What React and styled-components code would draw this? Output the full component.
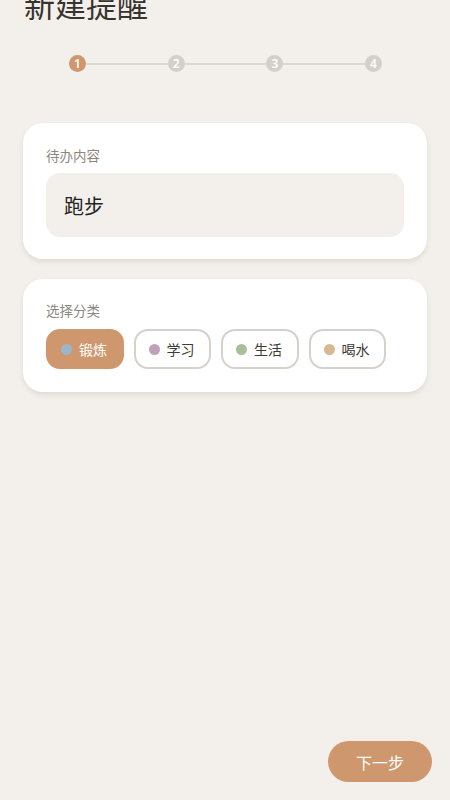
import React, { useState } from "react";
import styled, { createGlobalStyle } from "styled-components";

const GlobalStyle = createGlobalStyle`
  html, body {
    margin: 0;
    padding: 0;
    background: #f3f0eb;
  }
  body {
    font-family: "Noto Sans CJK SC", "Noto Sans", sans-serif;
    overflow: hidden;
  }
`;

const Page = styled.div`
  width: 450px;
  height: 800px;
  display: flex;
  flex-direction: column;
  background: #f3f0eb;
  overflow: hidden;
`;

const Content = styled.div`
  padding: 0 23px;
  display: flex;
  flex-direction: column;
`;

const Title = styled.h1`
  margin: -15px 0 0 1px;
  font-size: 31px;
  line-height: 38px;
  font-weight: 400;
  color: #38332f;
`;

const Stepper = styled.div`
  display: flex;
  align-items: center;
  margin: 32px 45px 0 46px;
`;

const StepDot = styled.div`
  width: 17px;
  height: 17px;
  border-radius: 50%;
  flex-shrink: 0;
  display: flex;
  align-items: center;
  justify-content: center;
  background: ${(p) => (p.active ? "#cf976d" : "#d3cfca")};
  color: #fff;
  font-family: "Noto Sans", sans-serif;
  font-size: 12px;
  font-weight: 600;
  line-height: 1;
`;

const StepLine = styled.div`
  flex: 1;
  height: 2px;
  background: #dcd8d3;
`;

const Card = styled.div`
  background: #fff;
  border-radius: 20px;
  padding: ${(p) => p.pad || "23px 23px 22px"};
  margin-top: ${(p) => p.top || "20px"};
  box-shadow: 0 3px 5px rgba(90, 75, 60, 0.12);
`;

const Label = styled.div`
  font-size: 13.5px;
  line-height: 18px;
  color: #8b8681;
  margin-bottom: ${(p) => p.gap || "9px"};
`;

const InputBox = styled.div`
  height: 64px;
  border-radius: 14px;
  background: #f3f0eb;
  display: flex;
  align-items: center;
  padding: 0 18px;
  font-size: 20px;
  color: #222;
`;

const Chips = styled.div`
  display: flex;
  gap: 10px;
`;

const Chip = styled.button`
  width: 77.5px;
  height: 40px;
  box-sizing: border-box;
  display: flex;
  align-items: center;
  gap: 7px;
  padding: 0 0 0 13px;
  border-radius: 14px;
  border: 2px solid ${(p) => (p.selected ? "#cf976d" : "#d5d1cc")};
  background: ${(p) => (p.selected ? "#cf976d" : "#fff")};
  color: ${(p) => (p.selected ? "#fff" : "#3f3a36")};
  font-family: inherit;
  font-size: 14px;
  cursor: pointer;
`;

const Dot = styled.span`
  width: 11px;
  height: 11px;
  flex-shrink: 0;
  border-radius: 50%;
  background: ${(p) => p.color};
`;

const Footer = styled.div`
  margin-top: auto;
  display: flex;
  justify-content: flex-end;
  padding: 0 18px 18px;
`;

const NextButton = styled.button`
  width: 104px;
  height: 41px;
  border: none;
  border-radius: 21px;
  background: #cf976d;
  color: #fff;
  font-family: inherit;
  font-size: 16px;
  cursor: pointer;
`;

const categories = [
  { name: "锻炼", color: "#9db5cb" },
  { name: "学习", color: "#c0a2b7" },
  { name: "生活", color: "#a8bf9a" },
  { name: "喝水", color: "#d6b893" },
];

export default function App() {
  const [selected, setSelected] = useState("锻炼");
  const step = 1;

  return (
    <Page>
      <GlobalStyle />
      <Content>
        <Title>新建提醒</Title>
        <Stepper>
          {[1, 2, 3, 4].map((n) => (
            <React.Fragment key={n}>
              {n > 1 && <StepLine />}
              <StepDot active={n === step}>{n}</StepDot>
            </React.Fragment>
          ))}
        </Stepper>

        <Card top="51px">
          <Label>待办内容</Label>
          <InputBox>跑步</InputBox>
        </Card>

        <Card pad="22px 23px 23px">
          <Label gap="10px">选择分类</Label>
          <Chips>
            {categories.map((c) => (
              <Chip
                key={c.name}
                selected={selected === c.name}
                onClick={() => setSelected(c.name)}
              >
                <Dot color={c.color} />
                {c.name}
              </Chip>
            ))}
          </Chips>
        </Card>
      </Content>
      <Footer>
        <NextButton>下一步</NextButton>
      </Footer>
    </Page>
  );
}
